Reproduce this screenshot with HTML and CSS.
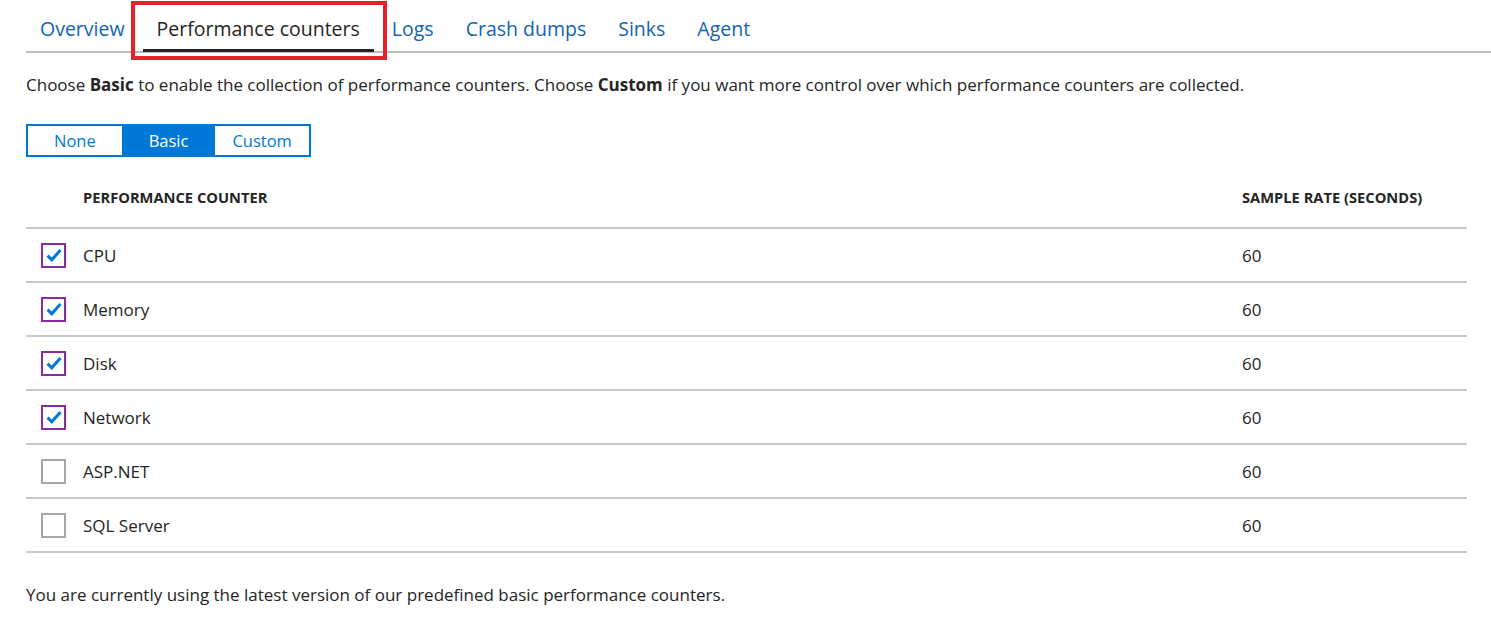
FILE: index.html
```html
<!DOCTYPE html>
<html>
<head>
<meta charset="utf-8">
<link rel="stylesheet" href="styles.css">
</head>
<body>
<div class="page">
  <nav class="tabs">
    <a class="tab">Overview</a>
    <a class="tab tab-active">Performance counters<span class="highlight"></span></a>
    <a class="tab">Logs</a>
    <a class="tab">Crash dumps</a>
    <a class="tab">Sinks</a>
    <a class="tab">Agent</a>
  </nav>

  <p class="intro">Choose <b>Basic</b> to enable the collection of performance counters. Choose <b>Custom</b> if you want more control over which performance counters are collected.</p>

  <div class="segmented">
    <button class="seg">None</button>
    <button class="seg seg-on">Basic</button>
    <button class="seg">Custom</button>
  </div>

  <div class="table">
    <div class="row head">
      <div class="cell"></div>
      <div class="cell">PERFORMANCE COUNTER</div>
      <div class="cell">SAMPLE RATE (SECONDS)</div>
    </div>
    <div class="row">
      <div class="cell"><span class="box checked"><svg viewBox="0 0 16 16" width="18" height="18"><path d="M2.3 8.6 L6 12.2 L13.8 3.6" fill="none" stroke="#0078d7" stroke-width="2.7"/></svg></span></div>
      <div class="cell">CPU</div>
      <div class="cell">60</div>
    </div>
    <div class="row">
      <div class="cell"><span class="box checked"><svg viewBox="0 0 16 16" width="18" height="18"><path d="M2.3 8.6 L6 12.2 L13.8 3.6" fill="none" stroke="#0078d7" stroke-width="2.7"/></svg></span></div>
      <div class="cell">Memory</div>
      <div class="cell">60</div>
    </div>
    <div class="row">
      <div class="cell"><span class="box checked"><svg viewBox="0 0 16 16" width="18" height="18"><path d="M2.3 8.6 L6 12.2 L13.8 3.6" fill="none" stroke="#0078d7" stroke-width="2.7"/></svg></span></div>
      <div class="cell">Disk</div>
      <div class="cell">60</div>
    </div>
    <div class="row">
      <div class="cell"><span class="box checked"><svg viewBox="0 0 16 16" width="18" height="18"><path d="M2.3 8.6 L6 12.2 L13.8 3.6" fill="none" stroke="#0078d7" stroke-width="2.7"/></svg></span></div>
      <div class="cell">Network</div>
      <div class="cell">60</div>
    </div>
    <div class="row">
      <div class="cell"><span class="box"></span></div>
      <div class="cell">ASP.NET</div>
      <div class="cell">60</div>
    </div>
    <div class="row">
      <div class="cell"><span class="box"></span></div>
      <div class="cell">SQL Server</div>
      <div class="cell">60</div>
    </div>
  </div>

  <p class="footer">You are currently using the latest version of our predefined basic performance counters.</p>
</div>
</body>
</html>
```

FILE: styles.css
```css
* { box-sizing: border-box; }
html, body { margin: 0; padding: 0; background: #fff; }
body {
  font-family: "Open Sans", "Noto Sans", "Liberation Sans", sans-serif;
  color: #252525;
}
.page { padding-left: 26px; }

.tabs {
  display: flex;
  height: 53px;
  border-bottom: 2px solid #bcbcbc;
  gap: 4px;
}
.tab {
  position: relative;
  display: flex;
  align-items: center;
  padding: 6px 14px 0;
  height: 51px;
  font-size: 19.5px;
  color: #1263b5;
  cursor: pointer;
}
.tab-active {
  color: #252525;
  border-bottom: 3px solid #252525;
  height: 52px;
  padding-top: 8px;
}
.highlight {
  position: absolute;
  left: -12px;
  right: -13px;
  top: 1px;
  height: 59px;
  border: 4px solid #e8202a;
}

.intro {
  margin: 20px 0 0;
  font-size: 17px;
  line-height: 24px;
}
.intro b { font-weight: 700; }

.segmented {
  display: flex;
  width: 285px;
  height: 33px;
  margin-top: 27px;
  border: 2px solid #0078d7;
}
.seg {
  flex: 1;
  border: 0;
  background: #fff;
  color: #0078d7;
  font-family: inherit;
  font-size: 16.5px;
  padding: 0;
  padding-bottom: 1px;
}
.seg-on { background: #0078d7; color: #fff; }

.table { width: 1441px; margin-top: 26px; }
.row {
  display: grid;
  grid-template-columns: 57px 1159px 1fr;
  align-items: center;
  height: 54px;
  border-bottom: 2px solid #c8c8c8;
  font-size: 17px;
}
.row.head {
  height: 46px;
  align-items: start;
  padding-top: 4px;
  font-size: 14.7px;
  font-weight: 700;
}
.cell { display: flex; align-items: center; }
.box {
  width: 25px;
  height: 25px;
  margin-left: 15px;
  border: 2px solid #a6a6a6;
  display: flex;
  align-items: center;
  justify-content: center;
}
.box.checked { border-color: #8a2aa6; }

.footer {
  margin: 30px 0 0;
  font-size: 17px;
  line-height: 24px;
}
```
